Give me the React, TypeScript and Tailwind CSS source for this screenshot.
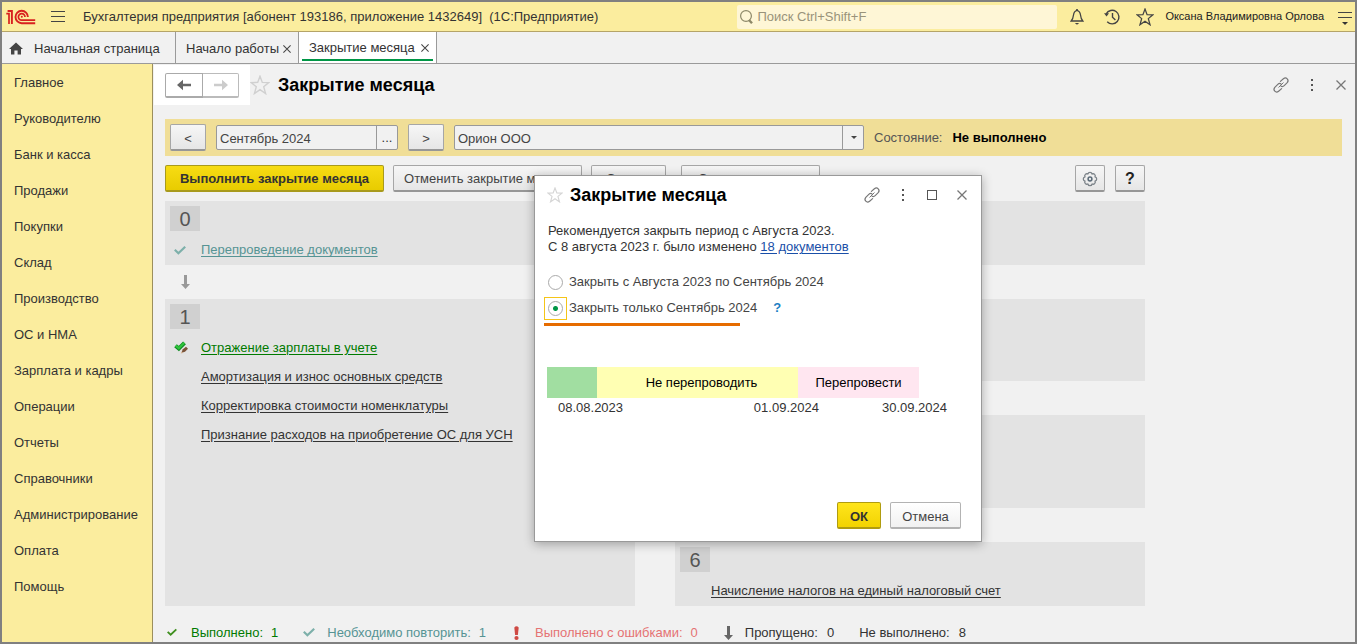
import React from 'react';

const SECTIONS = [
  'Главное',
  'Руководителю',
  'Банк и касса',
  'Продажи',
  'Покупки',
  'Склад',
  'Производство',
  'ОС и НМА',
  'Зарплата и кадры',
  'Операции',
  'Отчеты',
  'Справочники',
  'Администрирование',
  'Оплата',
  'Помощь',
];

const OPERATIONS = [
  'Амортизация и износ основных средств',
  'Корректировка стоимости номенклатуры',
  'Признание расходов на приобретение ОС для УСН',
];

type IconProps = { className?: string };

const Logo: React.FC = () => (
  <svg width="30" height="16" viewBox="0 0 30 16" fill="none" stroke="#d8201f" strokeWidth="1.9">
    <path d="M0.3 4.6 H3 V15" strokeWidth="1.7" />
    <path d="M1.6 2 H5.9 V15" strokeWidth="1.9" />
    <path d="M21.9 8 A6.2 6.2 0 1 0 15.8 14.2 H29.2" />
    <path d="M19 8 A3.3 3.3 0 1 0 15.8 11.2 H29.2" strokeWidth="1.7" />
    <circle cx="15.8" cy="7.8" r="1" fill="#d8201f" stroke="none" />
  </svg>
);

const StarIcon: React.FC<IconProps> = ({ className }) => (
  <svg className={className} viewBox="0 0 20 20" fill="none" stroke="currentColor" strokeWidth="1.4">
    <path d="M10 1.2 L12.3 7.4 L18.8 7.6 L13.7 11.8 L15.6 18.6 L10 14.7 L4.4 18.6 L6.3 11.8 L1.2 7.6 L7.7 7.4 Z" />
  </svg>
);

const HomeIcon: React.FC = () => (
  <svg width="14" height="13" viewBox="0 0 14 13" fill="#444">
    <path d="M7 0.5 L14 7 H12 V12.5 H8.6 V8.5 H5.4 V12.5 H2 V7 H0 Z" />
  </svg>
);

const SearchIcon: React.FC = () => (
  <svg width="13" height="16" viewBox="0 0 13 16" fill="none" stroke="#8d8868">
    <circle cx="6" cy="7" r="5.4" strokeWidth="1.2" />
    <path d="M9 11 L12 14.2" strokeWidth="2.4" />
  </svg>
);

const BellIcon: React.FC = () => (
  <svg width="14" height="16" viewBox="0 0 14 16" fill="none" stroke="#444" strokeWidth="1.3">
    <path d="M7 1.4 C4.6 2 3.8 3.8 3.5 6 C3.2 9 2.6 10.3 1.2 12 H12.8 C11.4 10.3 10.8 9 10.5 6 C10.2 3.8 9.4 2 7 1.4 Z" />
    <path d="M4.8 14 H9.2 L7 15.8 Z M6.2 0 H7.8 V2 H6.2 Z" fill="#444" stroke="none" />
  </svg>
);

const HistoryIcon: React.FC = () => (
  <svg width="16" height="16" viewBox="0 0 16 16" fill="none" stroke="#444" strokeWidth="1.4">
    <path d="M2.2 4.8 A6.8 6.8 0 1 1 3.2 12.8" />
    <path d="M8.5 4 V8.2 L11.4 11" />
    <path d="M0 4.2 H5 L2.6 7.4 Z" fill="#444" stroke="none" />
  </svg>
);

const LinkIcon: React.FC = () => (
  <svg width="18" height="18" viewBox="0 0 18 18" fill="none" stroke="#777" strokeWidth="1.2" strokeLinecap="round">
    <path d="M8.4 5.4 L11.4 2.8 C12.6 1.8 14.2 1.8 15.2 2.8 C16.2 3.8 16.2 5.4 15.2 6.6 L12.2 9.6 C11.2 10.6 9.6 10.6 8.8 9.8" />
    <path d="M9.6 12.6 L6.6 15.2 C5.4 16.2 3.8 16.2 2.8 15.2 C1.8 14.2 1.8 12.6 2.8 11.4 L5.8 8.4 C6.8 7.4 8.4 7.4 9.2 8.2" />
    <path d="M6.8 11.2 L11.2 6.8" strokeWidth="1" />
  </svg>
);

const DotsIcon: React.FC = () => (
  <svg width="4" height="12" viewBox="0 0 4 12" fill="#555">
    <path d="M1 0 H3 V2 H1 Z M1 5 H3 V7 H1 Z M1 10 H3 V12 H1 Z" />
  </svg>
);

const CloseIcon: React.FC<IconProps> = ({ className }) => (
  <svg className={className} viewBox="0 0 10 10" fill="none" stroke="currentColor" strokeWidth="1.3">
    <path d="M0.5 0.5 L9.5 9.5 M9.5 0.5 L0.5 9.5" />
  </svg>
);

const ArrowIcon: React.FC<IconProps> = ({ className }) => (
  <svg className={className} width="14" height="12" viewBox="0 0 14 12" fill="currentColor">
    <path d="M0 6 L6 0.8 V4.8 H14 V7.2 H6 V11.2 Z" />
  </svg>
);

const DownIcon: React.FC<IconProps> = ({ className }) => (
  <svg className={className} width="9" height="14" viewBox="0 0 9 14" fill="currentColor">
    <path d="M3 0 H6 V9 H9 L4.5 14 L0 9 H3 Z" />
  </svg>
);

const CheckIcon: React.FC<IconProps> = ({ className }) => (
  <svg className={className} width="12" height="9" viewBox="0 0 12 9" fill="none" stroke="currentColor" strokeWidth="2.2">
    <path d="M0.8 3.8 L4.4 7.2 L11.2 0.8" />
  </svg>
);

const ManualCheckIcon: React.FC = () => (
  <svg width="15" height="13" viewBox="0 0 15 13" fill="none">
    <path d="M1.5 4.8 L4.8 7.6 L10.5 1.8" stroke="#0f8a22" strokeWidth="4" />
    <path d="M1.7 4.6 L4.8 7.2 L10.3 1.8" stroke="#2fc43c" strokeWidth="2.2" />
    <path d="M7.6 11.8 L8.6 8.6 L12 5.8 L14 7.8 L11 10.8 Z" fill="#7a5238" />
    <path d="M6.8 12.6 L7.4 10.6 L8.8 11.9 Z" fill="#d9b48f" />
  </svg>
);

const GearIcon: React.FC = () => (
  <svg width="16" height="16" viewBox="0 0 16 16" fill="none" stroke="#7b8288" strokeWidth="1.3">
    <path
      d="M5.9 3 A2.15 2.15 0 0 1 10.1 3 A2.15 2.15 0 0 1 13 5.9 A2.15 2.15 0 0 1 13 10.1 A2.15 2.15 0 0 1 10.1 13 A2.15 2.15 0 0 1 5.9 13 A2.15 2.15 0 0 1 3 10.1 A2.15 2.15 0 0 1 3 5.9 A2.15 2.15 0 0 1 5.9 3 Z"
      strokeLinejoin="round"
    />
    <circle cx="8" cy="8" r="1.9" stroke="#5b6b78" strokeWidth="1.5" />
  </svg>
);

const BUTTON =
  'flex h-[27px] shrink-0 items-center justify-center rounded-[2px] border border-[#a6a6a6] border-b-2 border-b-[#979797] bg-linear-to-b from-[#f6f6f6] to-[#e6e6e6] text-[#444]';

const StepNumber: React.FC<{ value: number }> = ({ value }) => (
  <div className="flex h-[25px] w-[30px] items-center justify-center bg-[#d0d0d0] text-xl text-[#555]">{value}</div>
);

const StepArrow: React.FC = () => (
  <div className="flex h-[34px] items-center pl-4 text-[#999]">
    <DownIcon />
  </div>
);

const TopBar: React.FC = () => (
  <header className="flex h-[30px] shrink-0 items-center border-b border-[#b5a468] bg-[#fbed9e] pr-[2px] pl-1">
    <Logo />
    <button aria-label="Меню" className="ml-[15px] flex w-4 flex-col gap-1">
      <span className="h-px w-[14px] bg-[#444]" />
      <span className="h-px w-[14px] bg-[#444]" />
      <span className="h-px w-[14px] bg-[#444]" />
    </button>
    <h1 className="ml-4 flex-1 whitespace-nowrap">
      Бухгалтерия предприятия [абонент 193186, приложение 1432649]&nbsp; (1С:Предприятие)
    </h1>
    <label className="flex h-6 w-[320px] items-center gap-1 rounded-[2px] bg-[#fef6d6] pl-[3px]">
      <SearchIcon />
      <input
        type="text"
        aria-label="Поиск"
        placeholder="Поиск Ctrl+Shift+F"
        className="min-w-0 flex-1 bg-transparent outline-none placeholder:text-[#99937a]"
      />
    </label>
    <button aria-label="Уведомления" className="ml-[13px]"><BellIcon /></button>
    <button aria-label="История" className="ml-5"><HistoryIcon /></button>
    <button aria-label="Избранное" className="ml-4"><StarIcon className="h-[18px] w-[18px] text-[#444]" /></button>
    <span className="ml-[11px] text-[11px] whitespace-nowrap text-[#222]">Оксана Владимировна Орлова</span>
    <button aria-label="Настройки" className="ml-[13px] flex w-4 flex-col items-center gap-1 pt-1">
      <span className="h-px w-[14px] bg-[#444]" />
      <span className="h-px w-[14px] bg-[#444]" />
      <svg width="6" height="3" viewBox="0 0 6 3" fill="#333"><path d="M0 0 H6 L3 3 Z" /></svg>
    </button>
  </header>
);

const TabBar: React.FC = () => (
  <nav className="flex h-8 shrink-0 border-b border-[#9a9a9a] bg-[#f1f1f1]">
    <a href="#home" className="flex w-[174px] items-center gap-[11px] border-r border-[#9a9a9a] pt-[2px] pl-[7px]">
      <HomeIcon />
      Начальная страница
    </a>
    <div className="flex w-[123px] items-center justify-between border-r border-[#9a9a9a] pt-[2px] pr-[7px] pl-[10px]">
      <a href="#start">Начало работы</a>
      <button aria-label="Закрыть вкладку"><CloseIcon className="h-2 w-2 text-[#444]" /></button>
    </div>
    <div className="flex w-[138px] flex-col border-r border-[#9a9a9a] bg-white px-[3px] pt-[5px] pb-[2px]">
      <div className="flex flex-1 items-center justify-between pr-[4px] pl-[7px]">
        <a href="#closing">Закрытие месяца</a>
        <button aria-label="Закрыть вкладку"><CloseIcon className="h-2 w-2 text-[#444]" /></button>
      </div>
      <div className="h-[2px] bg-[#009646]" />
    </div>
  </nav>
);

const Sidebar: React.FC = () => (
  <aside className="w-[151px] shrink-0 border-r border-[#9c8f5c] bg-[#fbed9e]">
    <ul className="pt-px">
      {SECTIONS.map((section) => (
        <li key={section}>
          <a href="#section" className="flex h-9 items-center pl-3">
            {section}
          </a>
        </li>
      ))}
    </ul>
  </aside>
);

const PeriodBar: React.FC = () => (
  <div className="mr-[13px] ml-3 flex h-[37px] shrink-0 items-center gap-[10px] bg-[#f0de97] px-[5px]">
    <button className={`${BUTTON} w-9 pt-[3px]`}>&lt;</button>
    <div className="flex h-[25px] w-[182px] shrink-0 rounded-[2px] border border-[#999] bg-[#f1f1f1]">
      <input
        type="text"
        aria-label="Период"
        defaultValue="Сентябрь 2024"
        className="min-w-0 flex-1 pt-[2px] pl-[3px] text-[#444] outline-none"
      />
      <button aria-label="Выбрать период" className="w-[21px] border-l border-[#999]">...</button>
    </div>
    <button className={`${BUTTON} w-9 pt-[3px]`}>&gt;</button>
    <div className="relative h-[25px] w-[410px] shrink-0">
      <select
        aria-label="Организация"
        className="h-full w-full appearance-none rounded-[2px] border border-[#999] bg-[#f1f1f1] pt-[2px] pl-[3px] text-[#444] outline-none"
      >
        <option>Орион ООО</option>
      </select>
      <div className="pointer-events-none absolute inset-y-0 right-0 flex w-[22px] items-center justify-center border-l border-[#999]">
        <svg width="6" height="3" viewBox="0 0 6 3" fill="#444"><path d="M0 0 H6 L3 3 Z" /></svg>
      </div>
    </div>
    <span className="text-[#555]">Состояние:</span>
    <strong className="text-black">Не выполнено</strong>
  </div>
);

const CommandBar: React.FC = () => (
  <div className="ml-3 flex w-[980px] pt-[9px]">
    <button className="mr-[9px] h-[27px] w-[219px] shrink-0 rounded-[2px] border border-[#a89a1c] border-b-2 bg-linear-to-b from-[#f7dc13] to-[#e8cc00] pt-[2px] font-bold text-[#333]">
      Выполнить закрытие месяца
    </button>
    <button className={`${BUTTON} mr-[9px] w-[189px] pt-px`}>Отменить закрытие месяца</button>
    <button className={`${BUTTON} mr-[15px] w-[75px] pt-px`}>Отчеты</button>
    <button className={`${BUTTON} w-[139px] pt-px`}>Справки-расчеты</button>
    <button aria-label="Настройка" className={`${BUTTON} mr-[10px] ml-auto w-[30px] pt-px`}><GearIcon /></button>
    <button className={`${BUTTON} w-[30px] pt-[2px]`}>
      <span className="text-base font-bold text-[#222]">?</span>
    </button>
  </div>
);

const Steps: React.FC = () => (
  <div className="ml-3 w-[980px] pt-[9px]">
    <section className="bg-[#e3e3e3] p-[5px]">
      <StepNumber value={0} />
      <div className="flex h-[29px] items-center pt-[9px] pl-1 text-[#569494]">
        <CheckIcon className="text-[#7db0aa]" />
        <a href="#repost" className="ml-[15px] underline underline-offset-2">Перепроведение документов</a>
      </div>
    </section>
    <div className="grid grid-cols-2 gap-10">
      <div className="flex flex-col">
        <StepArrow />
        <section className="flex-1 bg-[#e3e3e3] p-[5px]">
          <StepNumber value={1} />
          <ul className="pt-1">
            <li className="flex h-[29px] items-center pl-1">
              <ManualCheckIcon />
              <a href="#payroll" className="ml-3 text-[#007a00] underline underline-offset-2">Отражение зарплаты в учете</a>
            </li>
            {OPERATIONS.map((operation) => (
              <li key={operation} className="flex h-[29px] items-center pl-[31px]">
                <a href="#operation" className="underline underline-offset-2">{operation}</a>
              </li>
            ))}
          </ul>
        </section>
      </div>
      <div>
        <StepArrow />
        <section className="h-[82px] bg-[#e3e3e3]" />
        <StepArrow />
        <section className="h-[93px] bg-[#e3e3e3]" />
        <StepArrow />
        <section className="h-16 bg-[#e3e3e3] p-[5px]">
          <StepNumber value={6} />
          <div className="flex h-[29px] items-center pt-[9px] pl-[31px]">
            <a href="#tax" className="underline underline-offset-2">Начисление налогов на единый налоговый счет</a>
          </div>
        </section>
      </div>
    </div>
  </div>
);

const StatusBar: React.FC = () => (
  <footer className="ml-[14px] flex h-[35px] items-center pt-[18px] whitespace-nowrap">
    <div className="flex items-center text-[#007a00]">
      <CheckIcon className="mr-[14px] w-[10px] text-[#3f8f1f]" />
      <span className="mr-2">Выполнено:</span>1
    </div>
    <div className="ml-[25px] flex items-center text-[#569494]">
      <CheckIcon className="mr-3 text-[#7db0aa]" />
      <span className="mr-2">Необходимо повторить:</span>1
    </div>
    <div className="ml-7 flex items-center text-[#e57373]">
      <svg className="mr-4" width="5" height="14" viewBox="0 0 5 14" fill="#cf4a44">
        <path d="M0.3 1.5 Q2.5 -1 4.7 1.5 L3.9 9 H1.1 Z" />
        <ellipse cx="2.5" cy="12" rx="2.1" ry="1.9" />
      </svg>
      <span className="mr-2">Выполнено с ошибками:</span>0
    </div>
    <div className="ml-[26px] flex items-center">
      <DownIcon className="mr-3 text-[#666]" />
      <span className="mr-[9px]">Пропущено:</span>0
    </div>
    <div className="ml-[25px] flex items-center">
      <span className="mr-[9px]">Не выполнено:</span>8
    </div>
  </footer>
);

const PeriodDialog: React.FC = () => (
  <div
    role="dialog"
    aria-labelledby="dialog-title"
    className="absolute top-[111px] left-[381px] flex h-[367px] w-[448px] flex-col border border-[#999] bg-white px-3 pb-3 shadow-[0_2px_10px_rgba(0,0,0,0.3)]"
  >
    <div className="flex h-[38px] items-center">
      <StarIcon className="mr-[7px] h-4 w-4 text-[#d5d5d5]" />
      <h2 id="dialog-title" className="flex-1 text-lg font-bold text-black">Закрытие месяца</h2>
      <button aria-label="Ссылка"><LinkIcon /></button>
      <button aria-label="Еще" className="ml-5"><DotsIcon /></button>
      <button aria-label="Развернуть" className="ml-[22px] h-[10px] w-[10px] border border-[#555]" />
      <button aria-label="Закрыть" className="mr-[2px] ml-5"><CloseIcon className="h-[10px] w-[10px] text-[#777]" /></button>
    </div>
    <p className="pt-[9px] pl-px leading-4">
      Рекомендуется закрыть период с Августа 2023.
      <br />
      С 8 августа 2023 г. было изменено <a href="#documents" className="text-[#1a4fa8] underline underline-offset-2">18 документов</a>
    </p>
    <div className="-ml-[3px] flex flex-col pt-[14px] text-[#444]">
      <label className="flex h-[26px] items-center gap-[2px]">
        <span className="flex h-[23px] w-[23px] items-center justify-center">
          <input type="radio" name="period" className="h-[15px] w-[15px] appearance-none rounded-full border border-[#aaa] bg-white" />
        </span>
        Закрыть с Августа 2023 по Сентябрь 2024
      </label>
      <div className="flex h-[26px] items-center">
        <label className="flex items-center gap-[2px]">
          <span className="flex h-[23px] w-[23px] items-center justify-center border border-[#f5c518]">
            <input
              type="radio"
              name="period"
              defaultChecked
              className="h-[15px] w-[15px] appearance-none rounded-full border border-[#aaa] bg-white checked:bg-[radial-gradient(circle,#009646_2px,#fff_3px)]"
            />
          </span>
          Закрыть только Сентябрь 2024
        </label>
        <button aria-label="Справка" className="ml-4 font-bold text-[#1a80c4]">?</button>
      </div>
      <div className="mt-[2px] h-[3px] w-[196px] bg-[#e66c00]" />
    </div>
    <div className="mt-[41px] flex h-[31px] text-black">
      <div className="w-[50px] bg-[#a1dea1]" />
      <div className="flex w-[201px] items-center justify-center bg-[#ffffb3] pl-2">Не перепроводить</div>
      <div className="flex w-[121px] items-center justify-center bg-[#ffe6f0]">Перепровести</div>
    </div>
    <div className="flex h-5 items-center pr-[22px] pl-[11px]">
      <span>08.08.2023</span>
      <span className="ml-auto">01.09.2024</span>
      <span className="ml-[63px]">30.09.2024</span>
    </div>
    <div className="mt-auto flex justify-end gap-[9px] pr-2">
      <button className="h-[27px] w-11 rounded-[2px] border border-[#b09c10] border-b-2 bg-linear-to-b from-[#ffe51a] to-[#f2d300] pt-[3px] font-bold text-[#333]">
        ОК
      </button>
      <button className="h-[27px] w-[71px] rounded-[2px] border border-[#b3b3b3] border-b-2 bg-linear-to-b from-white to-[#f1f1f1] pt-[3px] text-[#444]">
        Отмена
      </button>
    </div>
  </div>
);

const App: React.FC = () => {
  return (
    <div className="flex h-screen flex-col overflow-hidden border-2 border-[#808080] bg-[#f1f1f1] font-['Liberation_Sans',Arial,sans-serif] text-[13px] text-[#333]">
      <TopBar />
      <TabBar />
      <div className="flex min-h-0 flex-1">
        <Sidebar />
        <main className="relative min-w-0 flex-1">
          <div className="flex items-center pt-px pr-[9px] pl-px">
            <div className="flex h-10 w-24 items-center justify-center bg-white">
              <button aria-label="Назад" className="flex h-[25px] w-[38px] items-center justify-center rounded-l-[2px] border border-b-2 border-[#aaa] text-[#666]">
                <ArrowIcon />
              </button>
              <button aria-label="Вперед" className="flex h-[25px] w-9 items-center justify-center rounded-r-[2px] border border-b-2 border-l-0 border-[#bbb] text-[#ccc]">
                <ArrowIcon className="rotate-180" />
              </button>
            </div>
            <StarIcon className="mr-2 h-5 w-5 text-[#d0d0d0]" />
            <h2 className="flex-1 text-lg font-bold text-black">Закрытие месяца</h2>
            <button aria-label="Ссылка"><LinkIcon /></button>
            <button aria-label="Еще" className="ml-5"><DotsIcon /></button>
            <button aria-label="Закрыть" className="ml-[22px]"><CloseIcon className="h-[10px] w-[10px] text-[#777]" /></button>
          </div>
          <div className="h-[14px]" />
          <PeriodBar />
          <CommandBar />
          <Steps />
          <StatusBar />
          <PeriodDialog />
        </main>
      </div>
    </div>
  );
};

export default App;
